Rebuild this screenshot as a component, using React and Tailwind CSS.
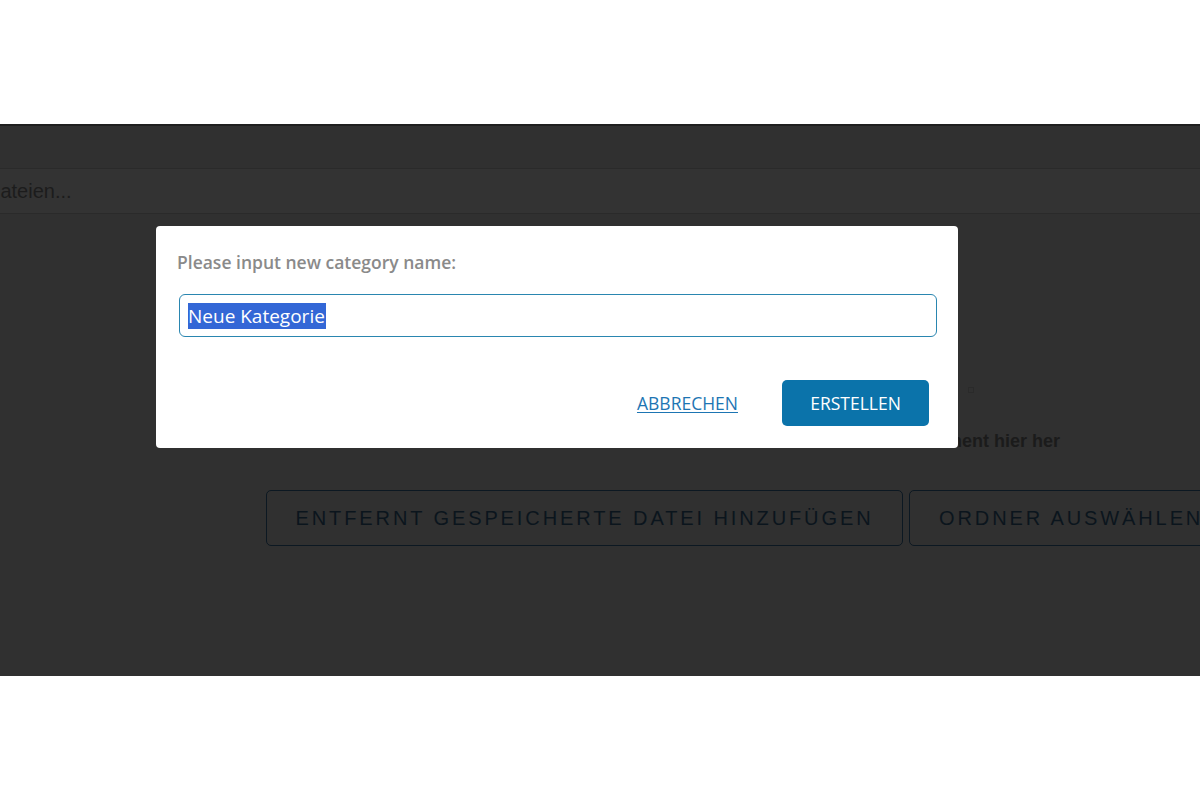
import React from "react";

export default function App() {
  return (
    <div className="h-[800px] w-[1200px] bg-white flex flex-col overflow-hidden">
      <div className="h-[124px] shrink-0 bg-white" />

      {/* dimmed page behind the dialog */}
      <div className="relative h-[552px] shrink-0 overflow-hidden bg-[#303030] border-t-2 border-[#1f1f1f]">
        <div className="h-[42px]" />
        <div className="h-[46px] bg-[#333333] border-y border-[#2a2a2a] flex items-center overflow-hidden">
          <span className="-ml-[14px] text-[20px] text-[#1c1c1c] font-['Liberation_Sans',Arial,sans-serif]">
            Dateien...
          </span>
        </div>

        <div className="relative h-[212px]">
          <span className="absolute left-[968px] top-[173px] w-[6px] h-[6px] border border-[#2a2a2a]" />
        </div>
        <div className="h-[30px] flex items-center justify-end pr-[140px]">
          <span className="text-[18px] font-bold text-[#1b1b1b] font-['Liberation_Sans',Arial,sans-serif]">
            Ziehen Sie ein Dokument hier her
          </span>
        </div>

        <div className="mt-[34px] flex gap-[6px] pl-[266px]">
          <div className="w-[637px] h-[56px] shrink-0 rounded-[5px] border border-[#0c1822] flex items-center justify-center text-[20px] tracking-[2.9px] text-[#0b151d] font-['Liberation_Sans',Arial,sans-serif]">
            ENTFERNT GESPEICHERTE DATEI HINZUFÜGEN
          </div>
          <div className="w-[400px] h-[56px] shrink-0 rounded-[5px] border border-[#0c1822] flex items-center pl-[29px] text-[20px] tracking-[2.9px] text-[#0b151d] font-['Liberation_Sans',Arial,sans-serif]">
            ORDNER AUSWÄHLEN
          </div>
        </div>

        {/* dialog */}
        <div className="absolute left-[156px] top-[100px] w-[802px] h-[222px] bg-white rounded-[4px] px-[23px] pt-[25px] font-['Open_Sans','Noto_Sans',sans-serif]">
          <div className="-ml-[2px] text-[17.5px] font-semibold text-[#8a8a8a] leading-[22px]">
            Please input new category name:
          </div>
          <div className="mt-[21px] h-[43px] w-[758px] rounded-[6px] border-[1.5px] border-[#2a86b0] flex items-center px-[8px]">
            <span className="bg-[#3367d6] text-white text-[19px] leading-[26px] pr-px">
              Neue Kategorie
            </span>
          </div>
          <div className="mt-[43px] flex items-center justify-end gap-[44px] pr-[6px]">
            <span className="text-[17.5px] text-[#1d75b3] underline underline-offset-2">
              ABBRECHEN
            </span>
            <div className="w-[147px] h-[46px] rounded-[5px] bg-[#0b73aa] flex items-center justify-center text-[17.5px] text-white">
              ERSTELLEN
            </div>
          </div>
        </div>
      </div>

      <div className="flex-1 bg-white" />
    </div>
  );
}
